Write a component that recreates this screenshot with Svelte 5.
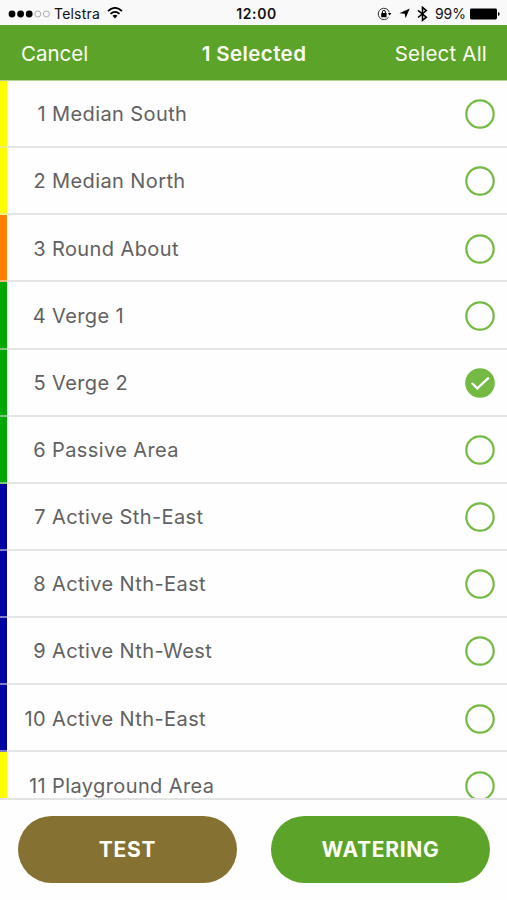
<script>
	let stations = [
		{ id: 1, name: 'Median South', group: 'yellow' },
		{ id: 2, name: 'Median North', group: 'yellow' },
		{ id: 3, name: 'Round About', group: 'orange' },
		{ id: 4, name: 'Verge 1', group: 'green' },
		{ id: 5, name: 'Verge 2', group: 'green', selected: true },
		{ id: 6, name: 'Passive Area', group: 'green' },
		{ id: 7, name: 'Active Sth-East', group: 'blue' },
		{ id: 8, name: 'Active Nth-East', group: 'blue' },
		{ id: 9, name: 'Active Nth-West', group: 'blue' },
		{ id: 10, name: 'Active Nth-East', group: 'blue' },
		{ id: 11, name: 'Playground Area', group: 'yellow' }
	];

	$: count = stations.filter((s) => s.selected).length;

	function toggle(station) {
		station.selected = !station.selected;
		stations = stations;
	}

	function setAll(value) {
		stations = stations.map((s) => ({ ...s, selected: value }));
	}
</script>

<div class="screen">
	<div class="status">
		<div class="side">
			<svg class="signal" width="42" height="10" viewBox="0 0 42 10">
				<circle cx="4" cy="5" r="3.4" />
				<circle cx="12.6" cy="5" r="3.4" />
				<circle cx="21.2" cy="5" r="3.4" />
				<circle class="empty" cx="29.8" cy="5" r="3" />
				<circle class="empty" cx="38.4" cy="5" r="3" />
			</svg>
			<span class="carrier">Telstra</span>
			<svg class="wifi" width="16" height="12" viewBox="0 0 16 12">
				<path d="M1 4.2 Q8 -2.4 15 4.2 M3.5 6.9 Q8 2.8 12.5 6.9" fill="none" stroke="#000" stroke-width="1.8" />
				<path d="M5.5 8.8 Q8 6.8 10.5 8.8 L8 11.5 Z" />
			</svg>
		</div>
		<span class="time">12:00</span>
		<div class="side right">
			<svg width="15" height="14" viewBox="0 0 15 14">
				<path d="M11.6 10.2 A5.7 5.7 0 1 1 12.4 5.4" fill="none" stroke="#333" stroke-width="1" />
				<path d="M10.8 6h3.6l-1.7 2.6z" />
				<rect x="4.2" y="6" width="5.4" height="4.3" rx="0.4" />
				<path d="M5.4 6V4.9a1.5 1.5 0 0 1 3 0V6" fill="none" stroke="#000" />
			</svg>
			<svg class="location" width="11" height="11" viewBox="0 0 11 11">
				<path d="M10.7 0.5 L6.6 10.3 L5.7 5.8 L0.4 5.2 Z" />
			</svg>
			<svg class="bluetooth" width="11" height="16" viewBox="0 0 11 16">
				<path d="M1 4.3 L9.3 11.2 L5.5 14.3 V1.4 L9.3 4.6 L1 11.5" fill="none" stroke="#000" stroke-width="1.6" />
			</svg>
			<span class="percent">99%</span>
			<svg class="battery" width="30" height="12" viewBox="0 0 30 12">
				<rect x="0" y="0.5" width="27" height="11" rx="1.4" />
				<path d="M28 4 Q29.7 4.4 29.7 6 T28 8 Z" />
			</svg>
		</div>
	</div>

	<header>
		<button class="link" on:click={() => setAll(false)}>Cancel</button>
		<h1>{count} Selected</h1>
		<button class="link all" on:click={() => setAll(true)}>Select All</button>
	</header>

	<div class="list">
		{#each stations as station (station.id)}
			<button class="row" on:click={() => toggle(station)}>
				<span class="bar {station.group}"></span>
				<span class="cell">
					<span class="number">{station.id}</span>
					<span class="name">{station.name}</span>
					<svg class="check" class:selected={station.selected} width="30" height="30" viewBox="0 0 30 30">
						<circle cx="15" cy="15" r="13.7" />
						{#if station.selected}
							<path d="M6.8 15 L12.3 20.3 L23.8 9.6" />
						{/if}
					</svg>
				</span>
			</button>
		{/each}
	</div>

	<footer>
		<button class="action test">TEST</button>
		<button class="action watering">WATERING</button>
	</footer>
</div>

<style>
	.screen {
		display: flex;
		flex-direction: column;
		width: 507px;
		height: 900px;
		overflow: hidden;
		background: #fefefe;
		font-family: Inter, 'Liberation Sans', sans-serif;
	}
	button {
		margin: 0;
		padding: 0;
		border: 0;
		background: none;
		font-family: inherit;
		cursor: pointer;
	}

	.status {
		display: flex;
		align-items: center;
		flex: none;
		height: 25px;
		box-sizing: border-box;
		padding: 2px 7px 0 8px;
		background: #f9f9f9;
		color: #111;
		font-size: 14px;
	}
	.side {
		display: flex;
		flex: 1;
		align-items: center;
	}
	.right {
		justify-content: flex-end;
	}
	.empty {
		fill: none;
		stroke: #999;
		stroke-width: 0.8;
	}
	.carrier {
		margin-left: 4px;
		letter-spacing: 0.2px;
	}
	.wifi {
		margin: -2px 0 0 7px;
	}
	.time {
		margin: 0 -2px 0 3px;
		font-weight: 600;
		letter-spacing: 0.6px;
	}
	.location {
		margin-left: 7px;
	}
	.bluetooth {
		margin-left: 7px;
	}
	.percent {
		margin: 0 4px 0 7px;
	}

	header {
		display: grid;
		grid-template-columns: 1fr auto 1fr;
		align-items: center;
		flex: none;
		height: 55px;
		box-sizing: border-box;
		padding: 2px 20px 0 21px;
		background: #5ca329;
		color: #fdfff5;
	}
	h1 {
		margin: 0;
		font-size: 20.5px;
		font-weight: 600;
		letter-spacing: 0.4px;
	}
	.link {
		justify-self: start;
		color: inherit;
		font-size: 20.5px;
	}
	.all {
		justify-self: end;
		letter-spacing: 0.2px;
	}

	.list {
		height: 718px;
		flex: none;
		overflow: hidden;
		border-top: 1px solid #b3d396;
		box-sizing: border-box;
	}
	.row {
		display: flex;
		width: 100%;
		height: 67.15px;
		color: #616161;
		font-size: 20px;
		letter-spacing: 0.4px;
		text-align: left;
	}
	.bar {
		width: 7px;
		height: 100%;
		box-shadow: inset 0 -2px rgba(226, 228, 228, 0.55);
	}
	.yellow {
		background-color: #ffff00;
	}
	.orange {
		background-color: #ff8000;
	}
	.green {
		background-color: #00a800;
	}
	.blue {
		background-color: #0000a2;
	}
	.cell {
		display: flex;
		flex: 1;
		align-items: center;
		height: 100%;
		box-sizing: border-box;
		padding: 1.5px 12px 0 0;
		border-bottom: 2px solid #e4e6e6;
	}
	.number {
		width: 39px;
		text-align: right;
	}
	.name {
		flex: 1;
		margin-left: 6px;
	}
	.check circle {
		fill: none;
		stroke: #73b943;
		stroke-width: 2.2;
	}
	.check.selected circle {
		fill: #73b943;
	}
	.check path {
		fill: none;
		stroke: #fff;
		stroke-width: 2.3;
	}

	footer {
		display: flex;
		justify-content: space-between;
		flex: 1;
		box-sizing: border-box;
		padding: 16px 17px 0 18px;
		border-top: 2px solid #e2e4e4;
	}
	.action {
		width: 219px;
		height: 67px;
		border-radius: 34px;
		color: #fffff8;
		font-size: 21px;
		font-weight: 700;
		letter-spacing: 0.7px;
	}
	.test {
		background: #857132;
	}
	.watering {
		background: #5ca329;
	}
</style>
